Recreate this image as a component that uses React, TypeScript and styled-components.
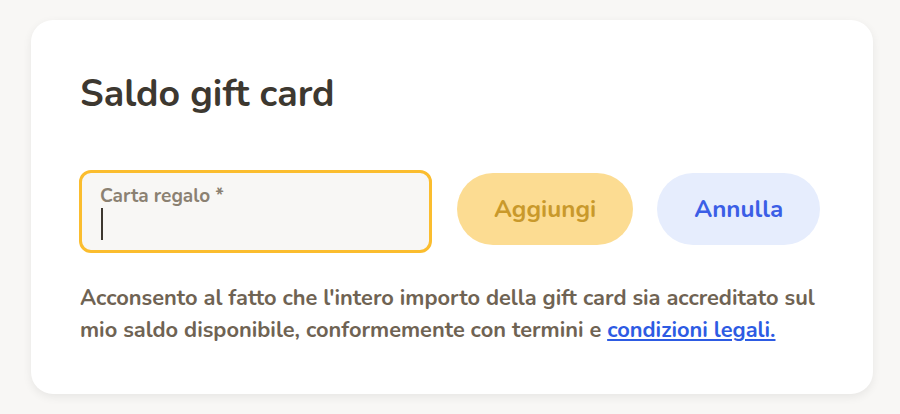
import React, { useState } from 'react';
import styled, { createGlobalStyle } from 'styled-components';

const GlobalStyle = createGlobalStyle`
  body {
    margin: 0;
    background: #f8f7f5;
    font-family: 'Nunito', 'Noto Sans', sans-serif;
  }
`;

const Page = styled.div`
  padding: 20px 27px 20px 31px;
`;

const Card = styled.div`
  background: #ffffff;
  border-radius: 22px;
  box-shadow: 0 3px 10px rgba(0, 0, 0, 0.07);
  padding: 51px 40px 40px 48px;
  height: 374px;
  box-sizing: border-box;
`;

const Title = styled.h1`
  margin: 0 0 0 1px;
  font-size: 37.5px;
  line-height: 46px;
  font-weight: 700;
  color: #3d3830;
`;

const Row = styled.div`
  display: flex;
  align-items: flex-start;
  margin-top: 53px;
`;

const Field = styled.label`
  position: relative;
  display: flex;
  flex-direction: column;
  width: 353px;
  height: 83px;
  box-sizing: border-box;
  border: 3px solid #fbbd2e;
  border-radius: 12px;
  background: #f8f7f5;
  padding: 13px 18px 0;
`;

const FieldLabel = styled.span`
  font-size: 19px;
  line-height: 20px;
  font-weight: 700;
  color: #8b8172;
`;

const Input = styled.input<{ $empty: boolean }>`
  border: none;
  background: transparent;
  outline: none;
  font: inherit;
  font-size: 23px;
  height: 34px;
  padding: 0;
  color: #3d3830;
  caret-color: ${(p) => (p.$empty ? 'transparent' : '#3d3830')};
`;

const Caret = styled.span`
  position: absolute;
  left: 19px;
  top: 35px;
  width: 2px;
  height: 32px;
  background: #3d3830;
  pointer-events: none;
`;

const Button = styled.button<{ $variant: 'primary' | 'secondary' }>`
  height: 72px;
  margin-top: 3px;
  margin-left: ${(p) => (p.$variant === 'primary' ? '25px' : '24px')};
  border: none;
  border-radius: 36px;
  font-family: inherit;
  font-size: 24.2px;
  font-weight: 700;
  padding: 0 37px;
  background: ${(p) => (p.$variant === 'primary' ? '#fcdc92' : '#e6edfd')};
  color: ${(p) => (p.$variant === 'primary' ? '#c9992b' : '#3b5ee6')};
  cursor: pointer;
`;

const Consent = styled.p`
  margin: 29px 0 0 1px;
  font-size: 21.8px;
  line-height: 32px;
  font-weight: 700;
  color: #6f6353;
  max-width: 750px;
`;

const Link = styled.a`
  color: #2d5be3;
  text-decoration: underline;
`;

export default function App() {
  const [code, setCode] = useState('');

  return (
    <>
      <GlobalStyle />
      <Page>
        <Card>
          <Title>Saldo gift card</Title>
          <Row>
            <Field>
              <FieldLabel>Carta regalo *</FieldLabel>
              <Input
                autoFocus
                $empty={code === ''}
                value={code}
                onChange={(e) => setCode(e.target.value)}
              />
              {code === '' && <Caret />}
            </Field>
            <Button $variant="primary">Aggiungi</Button>
            <Button $variant="secondary">Annulla</Button>
          </Row>
          <Consent>
            Acconsento al fatto che l'intero importo della gift card sia accreditato sul mio saldo
            disponibile, conformemente con termini e <Link href="#">condizioni legali.</Link>
          </Consent>
        </Card>
      </Page>
    </>
  );
}
